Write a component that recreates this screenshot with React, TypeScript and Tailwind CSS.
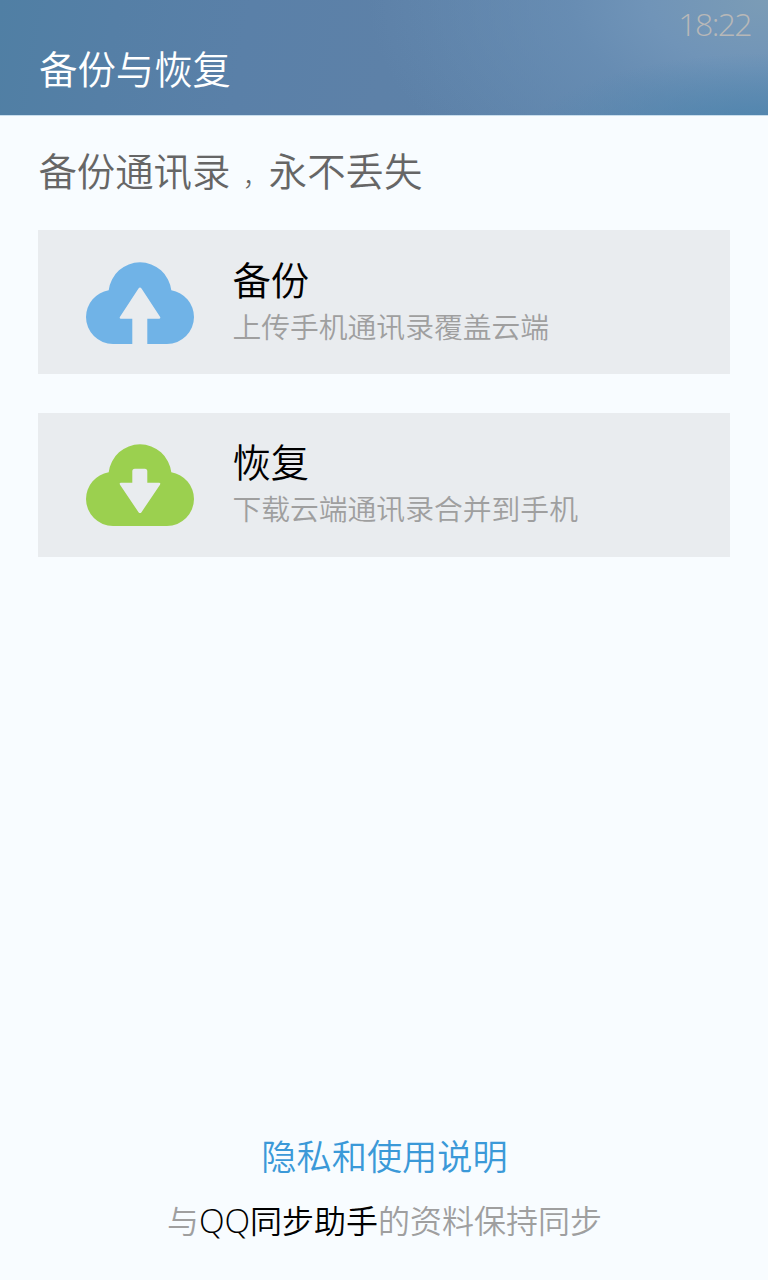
const actions = [
  {
    title: '备份',
    text: '上传手机通讯录覆盖云端',
    color: 'text-[#70b3e7]',
    arrow: 'M52.500 26.500 Q54 24.500 55.500 26.500 L74 54.700 Q75 56.700 73 56.700 H61.300 V83 H46.300 V56.700 H35 Q33 56.700 34 54.700 Z',
  },
  {
    title: '恢复',
    text: '下载云端通讯录合并到手机',
    color: 'text-[#9bd04f]',
    arrow: 'M48.800 24.700 H58.800 Q61.300 24.700 61.300 27.200 V38.700 H73 Q75 38.700 74 40.700 L55.500 68.200 Q54 70 52.500 68.200 L34 40.700 Q33 38.700 35 38.700 H46.300 V27.200 Q46.300 24.700 48.800 24.700 Z',
  },
]

export default function App() {
  return (
    <div className="flex flex-col h-[1280px] w-[768px] bg-[#f8fcff] font-['Noto_Sans_CJK_SC',sans-serif] font-[350]">
      {/* Header */}
      <header className="relative h-[116px] border-b border-[#c9deed] bg-[radial-gradient(ellipse_240px_85px_at_100%_120%,#4c84ad_0%,#4c84ad00_100%),radial-gradient(ellipse_400px_230px_at_100%_0%,#7b9cb6_0%,#7094b8_30%,#6b90b6bb_50%,#5f83aa00_100%),linear-gradient(100deg,#507fa4_0%,#557fa6_15%,#5a80a8_32%,#5d81a8_50%,#5b83aa_100%)] pl-[39px] pt-[39px]">
        <h1 className="text-[38.4px] leading-[56px] text-white">备份与恢复</h1>
        <span className="absolute right-[17px] top-[4px] text-[32px] leading-[40px] tracking-[-1.6px] text-[#b8b8b8] font-['Open_Sans',sans-serif] font-light">18:22</span>
      </header>
      <main className="flex flex-1 flex-col px-[38.4px]">
        <p className="mt-[25px] mb-[33.4px] h-[56px] text-[38.4px] leading-[56px] text-[#666]">
          备份通讯录<span className="inline-block w-[38.4px] pl-[12.4px] text-[26px] leading-[30px] font-light">，</span>永不丢失
        </p>
        <div className="flex flex-col gap-[38.4px]">
          {actions.map((item) => (
            <button key={item.title} className="flex h-[144px] items-center bg-[#e9ecef] pl-[47.6px] text-left">
              <svg className={`mt-px h-[82px] w-[108px] ${item.color}`} viewBox="0 0 108 82">
                <path fill="currentColor" d="M27 82 A27 27 0 0 1 0 55 A27 27 0 0 1 22.700 28.300 A31.600 31.600 0 0 1 54 0.300 A31.600 31.600 0 0 1 85.300 28.300 A27 27 0 0 1 108 55 A27 27 0 0 1 81 82 Z" />
                <path className="fill-[#e9ecef]" d={item.arrow} />
              </svg>
              <div className="-mt-[4px] ml-[38.4px]">
                <h2 className="-mt-px mb-px text-[38.4px] leading-[50px]">{item.title}</h2>
                <p className="text-[28.8px] leading-[43px] text-[#9f9f9f]">{item.text}</p>
              </div>
            </button>
          ))}
        </div>
        {/* Footer */}
        <footer className="mt-auto pb-[36px] text-center">
          <a className="block pl-px text-[35.2px] leading-[50px] text-[#3b99d8]">隐私和使用说明</a>
          <p className="mt-[14px] h-[50px] pl-px text-[32px] leading-[50px] text-[#9f9f9f]">
            与<span className="text-black"><span className="font-['Open_Sans',sans-serif] text-[33.500px] font-light">QQ</span>同步助手</span>的资料保持同步
          </p>
        </footer>
      </main>
    </div>
  )
}
